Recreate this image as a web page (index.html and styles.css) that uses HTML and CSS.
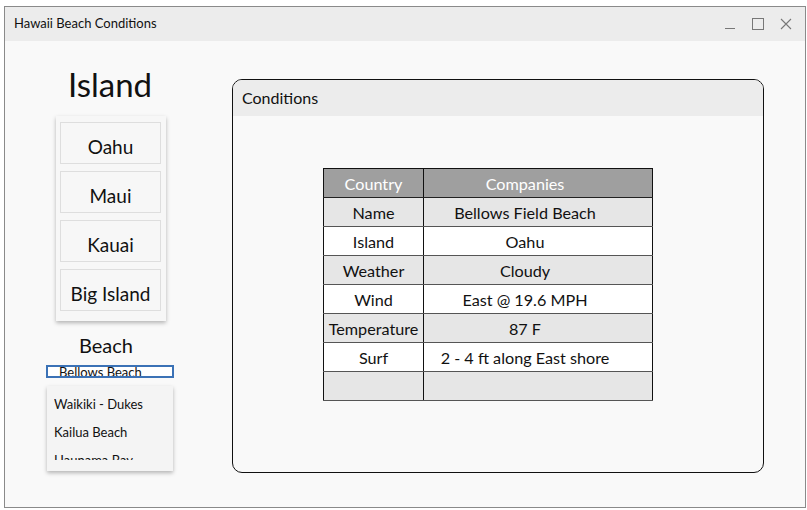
FILE: index.html
```html
<!DOCTYPE html>
<html>
<head>
<meta charset="utf-8">
<link rel="stylesheet" href="styles.css">
</head>
<body>
<div class="window">
  <div class="titlebar">
    <span class="title">Hawaii Beach Conditions</span>
    <div class="controls">
      <svg class="ctl" width="12" height="12" viewBox="0 0 12 12"><line x1="1" y1="10.5" x2="11" y2="10.5" stroke="#777" stroke-width="1"/></svg>
      <svg class="ctl" width="12" height="12" viewBox="0 0 12 12"><rect x="0.5" y="0.5" width="11" height="11" fill="none" stroke="#777" stroke-width="1"/></svg>
      <svg class="ctl" width="12" height="12" viewBox="0 0 12 12"><path d="M1 1L11 11M11 1L1 11" stroke="#777" stroke-width="1.1"/></svg>
    </div>
  </div>
  <div class="content">
    <div class="left">
      <div class="h-island">Island</div>
      <div class="listbox">
        <div class="item">Oahu</div>
        <div class="item">Maui</div>
        <div class="item">Kauai</div>
        <div class="item">Big Island</div>
      </div>
      <div class="h-beach">Beach</div>
      <div class="input"><span>Bellows Beach</span></div>
      <div class="dropdown">
        <div class="dd-list">
          <div class="opt">Waikiki - Dukes</div>
          <div class="opt">Kailua Beach</div>
          <div class="opt">Haunama Bay</div>
        </div>
      </div>
    </div>
    <div class="panel">
      <div class="panel-head">Conditions</div>
      <div class="panel-body">
        <table class="grid">
          <thead>
            <tr><th class="c1">Country</th><th class="c2">Companies</th></tr>
          </thead>
          <tbody>
            <tr class="alt"><td class="c1">Name</td><td class="c2">Bellows Field Beach</td></tr>
            <tr><td class="c1">Island</td><td class="c2">Oahu</td></tr>
            <tr class="alt"><td class="c1">Weather</td><td class="c2">Cloudy</td></tr>
            <tr><td class="c1">Wind</td><td class="c2">East @ 19.6 MPH</td></tr>
            <tr class="alt"><td class="c1">Temperature</td><td class="c2">87 F</td></tr>
            <tr><td class="c1">Surf</td><td class="c2">2 - 4 ft along East shore</td></tr>
            <tr class="alt"><td class="c1"></td><td class="c2"></td></tr>
          </tbody>
        </table>
      </div>
    </div>
  </div>
</div>
</body>
</html>
```
FILE: styles.css
```css
html, body {
  margin: 0;
  padding: 0;
  background: #ffffff;
}
body {
  font-family: "Lato", "Noto Sans", sans-serif;
  color: #111;
}
.window {
  margin: 6px 0 0 4px;
  width: 800px;
  height: 500px;
  border: 1px solid #8a8a8a;
  background: #f9f9f9;
  display: flex;
  flex-direction: column;
}
.titlebar {
  height: 34px;
  background: #ececec;
  display: flex;
  align-items: center;
  justify-content: space-between;
  padding: 0 0 0 9px;
}
.title {
  font-size: 13px;
  color: #111;
  margin-top: -2px;
}
.controls {
  display: flex;
  align-items: center;
  gap: 16px;
  padding-right: 13px;
}
.ctl { display: block; }
.content {
  flex: 1;
  display: flex;
  align-items: flex-start;
}
.left {
  width: 210px;
  display: flex;
  flex-direction: column;
  align-items: center;
}
.h-island {
  font-size: 33px;
  line-height: 40px;
  margin-top: 23px;
  color: #111;
}
.listbox {
  margin-top: 12px;
  width: 110px;
  padding: 6px 5px 10px 4px;
  box-sizing: border-box;
  background: #f7f7f7;
  box-shadow: 0 2px 4px rgba(0,0,0,0.28);
  display: flex;
  flex-direction: column;
  gap: 7px;
  margin-left: 2px;
}
.item {
  height: 42px;
  border: 1px solid #dedede;
  box-sizing: border-box;
  display: flex;
  align-items: center;
  justify-content: center;
  font-size: 19px;
  padding-top: 7px;
  color: #111;
}
.h-beach {
  font-size: 20px;
  line-height: 24px;
  margin-top: 12px;
  margin-left: -8px;
}
.input {
  margin-top: 8px;
  width: 128px;
  height: 13px;
  box-sizing: border-box;
  border: 2px solid #3b72b6;
  background: #fff;
  overflow: hidden;
  position: relative;
}
.input span {
  position: absolute;
  left: 11px;
  top: -3px;
  font-size: 13px;
  line-height: 16px;
  white-space: nowrap;
}
.dropdown {
  margin-top: 8px;
  width: 126px;
  height: 85px;
  box-sizing: border-box;
  background: #f4f4f4;
  box-shadow: 0 2px 4px rgba(0,0,0,0.28);
  padding: 4px 0 0 7px;
}
.dd-list {
  height: 70px;
  overflow: hidden;
}
.opt {
  font-size: 13px;
  line-height: 28px;
  white-space: nowrap;
}
.panel {
  margin-left: 17px;
  margin-top: 38px;
  width: 532px;
  height: 394px;
  box-sizing: border-box;
  border: 1px solid #111;
  border-radius: 10px;
  overflow: hidden;
  background: #f9f9f9;
}
.panel-head {
  height: 36px;
  background: #ececec;
  font-size: 16px;
  line-height: 36px;
  padding-left: 9px;
}
.panel-body {
  padding: 52px 0 0 90px;
}
.grid {
  border-collapse: collapse;
  font-size: 16.2px;
  border: 1px solid #111;
}
.grid th, .grid td {
  height: 29px;
  padding: 0;
  text-align: center;
  box-sizing: border-box;
}
.grid th {
  background: #9f9f9f;
  color: #fff;
  font-weight: normal;
  border-bottom: 1px solid #222;
}
.grid td {
  background: #fff;
  border-bottom: 1px solid #555;
  color: #111;
}
.grid tr.alt td {
  background: #e6e6e6;
}
.grid .c1 {
  width: 100px;
  border-right: 1px solid #111;
}
.grid .c2 {
  width: 229px;
  padding-right: 26px;
}
```
